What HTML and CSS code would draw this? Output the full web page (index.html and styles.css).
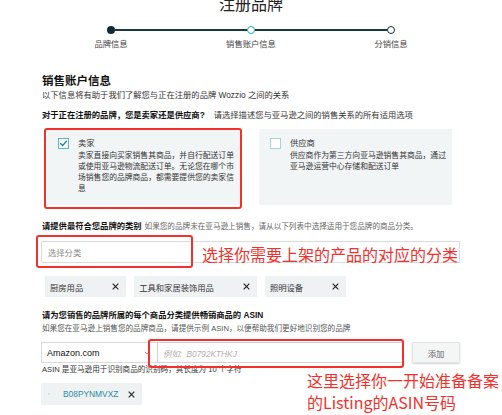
FILE: index.html
```html
<!DOCTYPE html>
<html lang="zh-CN">
<head>
<meta charset="utf-8">
<title>注册品牌</title>
<link rel="stylesheet" href="styles.css">
</head>
<body>
<div class="page">
  <h1 class="title">注册品牌</h1>

  <div class="stepper">
    <div class="track">
      <span class="dot dot-done"></span>
      <span class="bar"></span>
      <span class="dot dot-current"></span>
      <span class="bar"></span>
      <span class="dot dot-todo"></span>
    </div>
    <div class="step-labels">
      <span>品牌信息</span>
      <span>销售账户信息</span>
      <span>分销信息</span>
    </div>
  </div>

  <div class="content">
    <h2 class="section-title">销售账户信息</h2>
    <p class="section-sub">以下信息将有助于我们了解您与正在注册的品牌 Wozzio 之间的关系</p>
    <p class="question"><b>对于正在注册的品牌，您是卖家还是供应商?</b><span class="question-hint">请选择描述您与亚马逊之间的销售关系的所有适用选项</span></p>

    <div class="cards">
      <div class="card">
        <span class="checkbox checkbox-on">
          <svg viewBox="0 0 11 11" width="11" height="11"><path d="M2.6 5.6 L4.6 7.6 L8.4 3.2" fill="none" stroke="#1b8ca3" stroke-width="1.4" stroke-linecap="round" stroke-linejoin="round"/></svg>
        </span>
        <div class="card-text">
          <div class="card-title">卖家</div>
          <div class="card-desc">卖家直接向买家销售其商品，并自行配送订单或使用亚马逊物流配送订单。无论您在哪个市场销售您的品牌商品，都需要提供您的卖家信息</div>
        </div>
      </div>
      <div class="card">
        <span class="checkbox"></span>
        <div class="card-text">
          <div class="card-title">供应商</div>
          <div class="card-desc">供应商作为第三方向亚马逊销售其商品，通过亚马逊运营中心存储和配送订单</div>
        </div>
      </div>
    </div>

    <p class="field-label"><b>请提供最符合您品牌的类别</b><span class="field-hint">如果您的品牌未在亚马逊上销售，请从以下列表中选择适用于您品牌的商品分类。</span></p>
    <div class="category-select">
      <span class="placeholder">选择分类</span>
      <svg class="chevron" viewBox="0 0 8 5" width="7" height="5"><path d="M1 1 L4 4 L7 1" fill="none" stroke="#999" stroke-width="1"/></svg>
    </div>

    <div class="tags">
      <span class="tag">厨房用品<svg class="x" viewBox="0 0 8 8" width="7" height="7"><path d="M0.8 0.8 L7.2 7.2 M7.2 0.8 L0.8 7.2" stroke="#222" stroke-width="1.3"/></svg></span>
      <span class="tag">工具和家居装饰用品<svg class="x" viewBox="0 0 8 8" width="7" height="7"><path d="M0.8 0.8 L7.2 7.2 M7.2 0.8 L0.8 7.2" stroke="#222" stroke-width="1.3"/></svg></span>
      <span class="tag">照明设备<svg class="x" viewBox="0 0 8 8" width="7" height="7"><path d="M0.8 0.8 L7.2 7.2 M7.2 0.8 L0.8 7.2" stroke="#222" stroke-width="1.3"/></svg></span>
    </div>

    <p class="asin-title">请为您销售的品牌所属的每个商品分类提供畅销商品的 ASIN</p>
    <p class="asin-sub">如果您在亚马逊上销售您的品牌商品，请提供示例 ASIN，以便帮助我们更好地识别您的品牌</p>

    <div class="asin-row">
      <div class="market-select">
        <span>Amazon.com</span>
        <svg class="chevron" viewBox="0 0 8 5" width="6" height="4"><path d="M1 1 L4 4 L7 1" fill="none" stroke="#777" stroke-width="1"/></svg>
      </div>
      <div class="asin-input"><span class="placeholder-italic">例如:&nbsp; B0792KTHKJ</span></div>
      <button class="add-btn">添加</button>
    </div>
    <p class="asin-note">ASIN 是亚马逊用于识别商品的识别码，其长度为 10 个字符</p>

    <div class="asin-tag">
      <span class="thumb"></span>
      <span class="asin-code">B08PYNMVXZ</span>
      <svg class="x" viewBox="0 0 8 8" width="7" height="7"><path d="M0.8 0.8 L7.2 7.2 M7.2 0.8 L0.8 7.2" stroke="#222" stroke-width="1.3"/></svg>
    </div>
  </div>

  <span class="mark mark-seller"></span>
  <span class="mark mark-category"></span>
  <span class="mark mark-asin"></span>
  <span class="note note-category">选择你需要上架的产品的对应的分类</span>
  <span class="note note-asin">这里选择你一开始准备备案的Listing的ASIN号码</span>
</div>
</body>
</html>
```

FILE: styles.css
```css
* { box-sizing: border-box; }

html, body {
  margin: 0;
  padding: 0;
  background: #ffffff;
}

body {
  font-family: "Liberation Sans", "Noto Sans CJK SC", sans-serif;
  color: #111111;
}

.page {
  position: relative;
  width: 502px;
  height: 415px;
  overflow: hidden;
}

p { margin: 0; }

.title {
  margin: -7px 0 0;
  font-family: "Noto Sans CJK SC", sans-serif;
  font-size: 16px;
  line-height: 20px;
  font-weight: 400;
  text-align: center;
  color: #222;
}

/* Stepper */
.stepper { margin-top: 13px; }

.track {
  display: flex;
  align-items: center;
  width: 288px;
  height: 8px;
  margin-left: 107px;
}

.dot {
  width: 8px;
  height: 8px;
  border-radius: 50%;
  flex: none;
}
.dot-done { background: #0f2a33; }
.dot-current { background: #fff; border: 1.5px solid #1ea6ba; }
.dot-todo { background: #fff; border: 1.5px solid #15303a; }

.bar {
  flex: 1;
  height: 2px;
  background: #1b3944;
}

.step-labels {
  display: grid;
  grid-template-columns: repeat(3, 140px);
  margin: 4.5px 0 0 41px;
  font-size: 8.3px;
  line-height: 11px;
  color: #444;
  text-align: center;
}

/* Content */
.content {
  padding-left: 41px;
  width: 460px;
}

.section-title {
  margin: 24px 0 0 1px;
  font-size: 11.5px;
  line-height: 14px;
  font-weight: 700;
  color: #111;
}

.section-sub {
  margin: 2.5px 0 0 1px;
  font-size: 8.3px;
  line-height: 11px;
  color: #333;
}

.question {
  margin: 9px 0 0 1px;
  font-size: 8.3px;
  line-height: 11px;
  color: #333;
  white-space: nowrap;
}
.question b { color: #111; }
.question-hint { margin-left: 9px; }

/* Cards */
.cards {
  display: grid;
  grid-template-columns: 193px 193px;
  column-gap: 19px;
  margin: 8px 0 0 6px;
}

.card {
  display: flex;
  gap: 9px;
  background: #f2f5f6;
  padding: 8px 10px 10px 11px;
  min-height: 76px;
}

.checkbox {
  flex: none;
  width: 11px;
  height: 11px;
  margin-top: 1px;
  background: #fff;
  border: 1px solid #a9d0d8;
  display: flex;
}
.checkbox-on { border-color: #5db3c3; }
.checkbox svg { margin: -1px; }

.card-text {
  font-size: 7.8px;
  color: #333;
}
.card-title {
  font-size: 8.3px;
  line-height: 11px;
  margin-top: 1px;
}
.card-desc {
  width: calc(20em + 1px);
  line-height: 11px;
  margin-top: 1px;
}

/* Category */
.field-label {
  margin: 16px 0 0 1px;
  font-size: 8.3px;
  line-height: 11px;
  white-space: nowrap;
  color: #111;
}
.field-hint {
  margin-left: 3px;
  font-size: 7.6px;
  color: #666;
}

.category-select {
  display: flex;
  align-items: center;
  justify-content: space-between;
  width: 419px;
  height: 22px;
  margin-top: 9px;
  padding: 0 5px 0 6px;
  background: #fff;
  border: 1px solid #d8dcdc;
}
.placeholder {
  font-size: 8.3px;
  color: #888;
}

/* Tags */
.tags {
  display: flex;
  gap: 8px;
  margin: 13px 0 0 4px;
}
.tag {
  display: flex;
  align-items: center;
  height: 21px;
  padding: 0 7px 0 5px;
  background: #eef2f3;
  font-size: 8.3px;
  color: #333;
}
.tag .x { margin-left: 29px; }

/* ASIN */
.asin-title {
  margin: 12.5px 0 0 1px;
  font-size: 8.3px;
  line-height: 11px;
  font-weight: 700;
  color: #111;
}
.asin-sub {
  margin: 2px 0 0 1px;
  font-size: 7.6px;
  line-height: 11px;
  color: #555;
}

.asin-row {
  display: flex;
  width: 419px;
  height: 21px;
  margin-top: 8.5px;
}

.market-select {
  display: flex;
  align-items: center;
  justify-content: space-between;
  width: 116px;
  padding: 0 7px 0 5px;
  background: #fff;
  border: 1px solid #d8dcdc;
  border-right: none;
  font-size: 9px;
  color: #111;
}

.asin-input {
  display: flex;
  align-items: center;
  flex: 1;
  padding-left: 5px;
  background: #fff;
  border: 1px solid #cfd3d3;
}
.placeholder-italic {
  font-size: 8.3px;
  font-style: italic;
  color: #b0b0b0;
}

.add-btn {
  width: 48px;
  margin-left: 9px;
  padding: 0;
  background: #f4f5f5;
  border: 1px solid #e2e5e5;
  border-radius: 2px;
  box-shadow: 0 1px 2px rgba(0,0,0,0.18);
  font-family: "Noto Sans CJK SC", sans-serif;
  font-size: 8.3px;
  color: #666;
}

.asin-note {
  margin: 2px 0 0 1px;
  font-size: 7.6px;
  line-height: 10px;
  color: #333;
}

.asin-tag {
  display: flex;
  align-items: center;
  width: 101px;
  height: 22px;
  margin-top: 8px;
  padding: 0 7px 0 7px;
  background: #eef2f3;
}
.thumb {
  width: 2px;
  height: 2px;
  border-radius: 50%;
  background: #d6dcdd;
}
.asin-code {
  margin-left: 13px;
  font-size: 8.4px;
  color: #2a8aa5;
}
.asin-tag .x { margin-left: auto; }

/* Red annotations drawn over the screenshot */
.mark {
  position: absolute;
  border: 2px solid #f5302c;
  border-radius: 3px;
}
.mark-seller { left: 44px; top: 128px; width: 198px; height: 81px; }
.mark-category { left: 36px; top: 235px; width: 157px; height: 33px; }
.mark-asin { left: 148px; top: 339px; width: 256px; height: 29px; }

.note {
  position: absolute;
  font-family: "Noto Sans CJK SC", sans-serif;
  font-size: 16px;
  line-height: 22px;
  color: #f5302c;
}
.note-category { left: 202px; top: 242.5px; white-space: nowrap; }
.note-asin { left: 307px; top: 369px; width: 195px; }
```
